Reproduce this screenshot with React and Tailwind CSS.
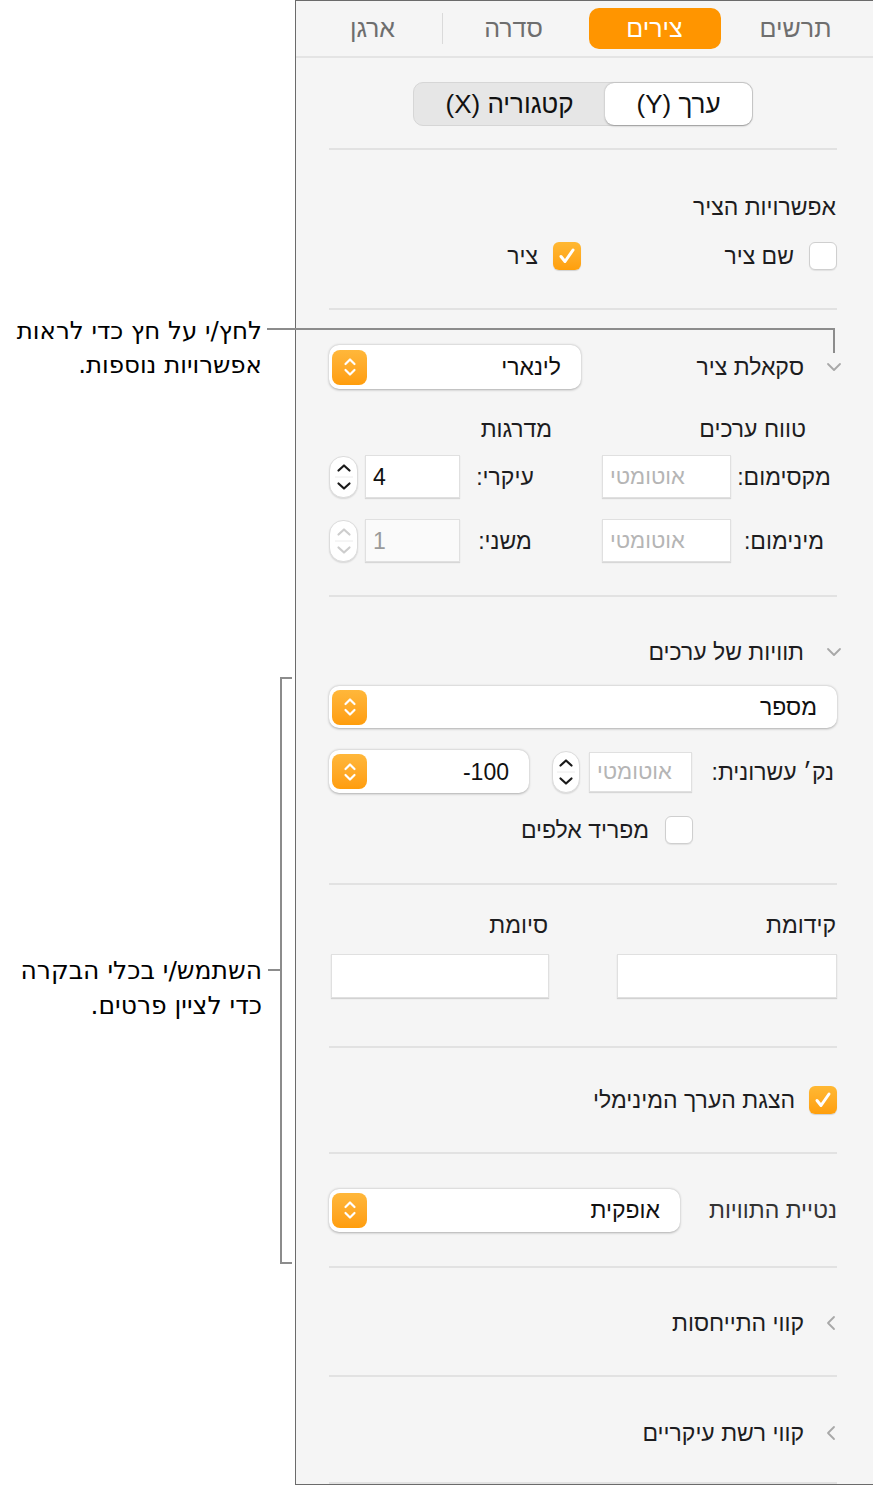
import React from "react"

const ChevronDown = () => (
  <svg width="16" height="10" viewBox="0 0 16 10">
    <path d="M2 2l6 6 6-6" stroke="#a8a8a8" strokeWidth="1.8" fill="none" strokeLinecap="round" strokeLinejoin="round" />
  </svg>
)

const ChevronLeft = () => (
  <svg width="10" height="16" viewBox="0 0 10 16">
    <path d="M8 2L2 8l6 6" stroke="#a8a8a8" strokeWidth="1.8" fill="none" strokeLinecap="round" strokeLinejoin="round" />
  </svg>
)

const Divider = () => <div className="h-[2px] shrink-0 bg-[#e2e2e2]" />

const Checkbox = ({ checked }) =>
  checked ? (
    <div className="w-[28px] h-[28px] shrink-0 rounded-[6px] bg-linear-to-b from-[#ffb833] to-[#ff9f0a] shadow-[0_1px_1px_rgba(0,0,0,0.15)] flex items-center justify-center">
      <svg width="22" height="22" viewBox="0 0 22 22">
        <path d="M5 11.5l4 5L17 5" stroke="white" strokeWidth="3" fill="none" strokeLinecap="round" strokeLinejoin="round" />
      </svg>
    </div>
  ) : (
    <div className="w-[28px] h-[28px] shrink-0 rounded-[6px] bg-white border border-[#cfcfcf] shadow-[0_1px_1px_rgba(0,0,0,0.08)]" />
  )

const OrangeArrows = () => (
  <div className="w-[35px] h-[35px] shrink-0 rounded-[8px] bg-linear-to-b from-[#ffb73a] to-[#ff9d0a] flex items-center justify-center">
    <svg width="16" height="26" viewBox="0 0 16 26">
      <path d="M3.5 10l4.5-4.5 4.5 4.5M3.5 16l4.5 4.5 4.5-4.5" stroke="white" strokeWidth="2.2" fill="none" strokeLinecap="round" strokeLinejoin="round" />
    </svg>
  </div>
)

const Popup = ({ text, className }) => (
  <div className={`shrink-0 flex items-center justify-between bg-white rounded-[10px] shadow-[0_0.5px_2.5px_rgba(0,0,0,0.3)] pr-[20px] pl-[3px] ${className}`}>
    <span dir="auto" className="text-[23px] text-[#111]">{text}</span>
    <OrangeArrows />
  </div>
)

const Stepper = ({ disabled, className }) => (
  <div className={`shrink-0 flex flex-col items-center justify-center bg-white rounded-[14px] border border-[#dcdcdc] shadow-[0_1px_1.5px_rgba(0,0,0,0.12)] ${className}`}>
    <svg width="18" height="40" viewBox="0 0 18 40">
      <path d="M3.5 13.5l5.5-5 5.5 5" stroke={disabled ? "#cdcdcd" : "#1a1a1a"} strokeWidth="2.2" fill="none" strokeLinecap="round" strokeLinejoin="round" />
      <path d="M0 20h18" stroke="#ececec" strokeWidth="1" />
      <path d="M3.5 26.5l5.5 5 5.5-5" stroke={disabled ? "#cdcdcd" : "#1a1a1a"} strokeWidth="2.2" fill="none" strokeLinecap="round" strokeLinejoin="round" />
    </svg>
  </div>
)

const Field = ({ value, placeholder, disabled, className }) => (
  <div dir="ltr" className={`shrink-0 flex items-center justify-start pl-[7px] border border-[#e0e0e0] shadow-[0_1px_1px_rgba(0,0,0,0.12)] text-[23px] ${disabled ? "bg-[#fafafa] text-[#9a9a9a]" : "bg-white text-[#111]"} ${className}`}>
    {placeholder ? <span dir="rtl" className="text-[22px] text-[#b5b5b5]">{placeholder}</span> : <span>{value}</span>}
  </div>
)

const App = () => {
  return (
    <div className="relative w-[873px] h-[1485px] bg-white flex overflow-hidden font-['Liberation_Sans','DejaVu_Sans',sans-serif] text-[#1d1d1f]">
      <div className="w-[295px] shrink-0" />

      <div dir="rtl" className="w-[578px] h-[1485px] shrink-0 border-l border-t border-b border-[#6b6b6b] bg-[#f5f5f5] overflow-hidden">
        {/* tabs */}
        <div className="grid grid-cols-4 h-[55px] pl-[6px] pr-[7px] items-center text-[25px] text-[#6e6e6e]">
          <div className="flex items-center justify-center">תרשים</div>
          <div className="flex items-center justify-center">
            <div className="w-[132px] h-[41px] rounded-[10px] bg-[#ff9500] text-white flex items-center justify-center">צירים</div>
          </div>
          <div className="flex items-center justify-center">סדרה</div>
          <div className="relative flex items-center justify-center h-full">
            ארגן
            <span className="absolute right-0 top-[12px] h-[31px] w-[1px] bg-[#dadada]" />
          </div>
        </div>
        <div className="h-[2px] bg-[#e4e4e4]" />

        <div className="pl-[33px] pr-[36px] flex flex-col text-[23px] leading-[28px]">
          {/* segmented */}
          <div className="pt-[24px] pb-[22px] flex justify-center">
            <div className="flex h-[44px] w-[340px] rounded-[10px] bg-[#e6e6e6] border border-[#d6d6d6] text-[26px] text-[#111]">
              <div className="w-[147px] h-full rounded-[9px] bg-white shadow-[0_0.5px_2px_rgba(0,0,0,0.3)] flex items-center justify-center">ערך (Y)</div>
              <div className="flex-1 flex items-center justify-center">קטגוריה (X)</div>
            </div>
          </div>
          <Divider />

          {/* axis options */}
          <div className="pt-[43px] pb-[38px] flex flex-col gap-[21px]">
            <div className="h-[28px] pr-[1px]">אפשרויות הציר</div>
            <div className="grid grid-cols-2 h-[28px]">
              <div className="flex items-center gap-[15px]">
                <Checkbox />
                <span>שם ציר</span>
              </div>
              <div className="flex items-center gap-[15px] pr-[2px]">
                <Checkbox checked />
                <span>ציר</span>
              </div>
            </div>
          </div>
          <Divider />

          {/* axis scale */}
          <div className="pt-[35px] pb-[33px] flex flex-col">
            <div className="flex items-center justify-between h-[44px]">
              <div className="flex items-center gap-[22px] -mr-[5px]">
                <ChevronDown />
                <span>סקאלת ציר</span>
              </div>
              <Popup text="לינארי" className="w-[252px] h-[44px]" />
            </div>
            <div className="grid grid-cols-2 mt-[26px] h-[28px]">
              <div className="pr-[31px]">טווח ערכים</div>
              <div className="pr-[31px]">מדרגות</div>
            </div>
            <div className="flex flex-col gap-[21px] mt-[12px]">
              <div className="flex items-center h-[43px]">
                <div className="w-[106px] text-center">מקסימום:</div>
                <Field placeholder="אוטומטי" className="w-[129px] h-[43px]" />
                <div className="w-[52px]" />
                <div className="w-[90px] text-center">עיקרי:</div>
                <Field value="4" className="w-[95px] h-[43px]" />
                <div className="w-[7px]" />
                <Stepper className="w-[29px] h-[42px]" />
              </div>
              <div className="flex items-center h-[43px]">
                <div className="w-[106px] text-center">מינימום:</div>
                <Field placeholder="אוטומטי" className="w-[129px] h-[43px]" />
                <div className="w-[52px]" />
                <div className="w-[90px] text-center">משני:</div>
                <Field value="1" disabled className="w-[95px] h-[43px]" />
                <div className="w-[7px]" />
                <Stepper disabled className="w-[29px] h-[42px]" />
              </div>
            </div>
          </div>
          <Divider />

          {/* value labels */}
          <div className="pt-[41px] pb-[39px] flex flex-col">
            <div className="flex items-center gap-[22px] -mr-[5px] h-[28px]">
              <ChevronDown />
              <span>תוויות של ערכים</span>
            </div>
            <Popup text="מספר" className="w-full h-[42px] mt-[20px]" />
            <div className="flex items-center h-[43px] mt-[22px]">
              <div className="w-[145px] pr-[3px]">נק׳ עשרונית:</div>
              <Field placeholder="אוטומטי" className="w-[103px] h-[40px]" />
              <div className="w-[9px]" />
              <Stepper className="w-[28px] h-[42px]" />
              <div className="w-[23px]" />
              <Popup text="-100" className="w-[200px] h-[43px]" />
            </div>
            <div className="flex items-center gap-[16px] h-[28px] mt-[23px] pr-[144px]">
              <Checkbox />
              <span>מפריד אלפים</span>
            </div>
          </div>
          <Divider />

          {/* prefix / suffix */}
          <div className="pt-[26px] pb-[48px] flex justify-between">
            <div className="w-[220px] flex flex-col gap-[15px]">
              <div className="h-[28px] pr-[1px]">קידומת</div>
              <div className="h-[44px] bg-white border border-[#e0e0e0] shadow-[0_1px_1px_rgba(0,0,0,0.14)]" />
            </div>
            <div className="w-[220px] flex flex-col gap-[15px] pl-[2px]">
              <div className="h-[28px] pr-[1px]">סיומת</div>
              <div className="h-[44px] bg-white border border-[#e0e0e0] shadow-[0_1px_1px_rgba(0,0,0,0.14)]" />
            </div>
          </div>
          <Divider />

          {/* show min value */}
          <div className="h-[104px] flex items-center gap-[14px]">
            <Checkbox checked />
            <span>הצגת הערך המינימלי</span>
          </div>
          <Divider />

          {/* label angle */}
          <div className="h-[112px] flex items-center justify-between">
            <span className="text-[#333]">נטיית התוויות</span>
            <Popup text="אופקית" className="w-[351px] h-[43px]" />
          </div>
          <Divider />

          <div className="h-[107px] pt-[3px] flex items-center gap-[22px] pr-[1px]">
            <ChevronLeft />
            <span>קווי התייחסות</span>
          </div>
          <Divider />

          <div className="h-[105px] pt-[7px] flex items-center gap-[22px] pr-[1px]">
            <ChevronLeft />
            <span>קווי רשת עיקריים</span>
          </div>
          <Divider />
        </div>
      </div>

      {/* callouts */}
      <div dir="rtl" className="absolute left-0 top-[314px] w-[262px] text-right font-['DejaVu_Sans',sans-serif] text-[24.5px] leading-[34px] text-black">
        <div>לחץ/י על חץ כדי לראות</div>
        <div>אפשרויות נוספות.</div>
      </div>
      <div className="absolute left-[267px] top-[328px] w-[568px] h-[2px] bg-[#8c8c8c]" />
      <div className="absolute left-[833px] top-[328px] w-[2px] h-[25px] bg-[#8c8c8c]" />

      <div dir="rtl" className="absolute left-0 top-[953px] w-[262px] text-right font-['DejaVu_Sans',sans-serif] text-[25px] leading-[35px] text-black">
        <div>השתמש/י בכלי הבקרה</div>
        <div>כדי לציין פרטים.</div>
      </div>
      <div className="absolute left-[268px] top-[969px] w-[13px] h-[2px] bg-[#8c8c8c]" />
      <div className="absolute left-[280px] top-[677px] w-[2px] h-[587px] bg-[#8c8c8c]" />
      <div className="absolute left-[280px] top-[677px] w-[12px] h-[2px] bg-[#8c8c8c]" />
      <div className="absolute left-[280px] top-[1262px] w-[12px] h-[2px] bg-[#8c8c8c]" />
    </div>
  )
}

export default App
